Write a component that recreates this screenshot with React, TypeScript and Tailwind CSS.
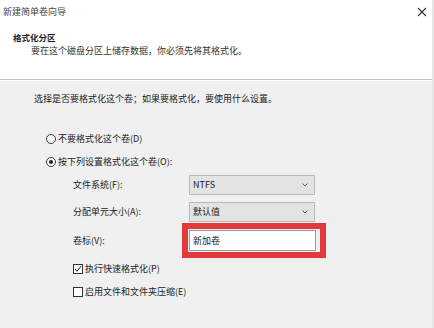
export default function App() {
  return (
    <div className="w-[434px] h-[328px] overflow-hidden bg-[#f0f0f0] border-r-2 border-[#e6e6e6] font-['Noto_Sans_CJK_SC',sans-serif] text-[9px] leading-[12px] text-[#222]">
      {/* 顶部白色标题区 */}
      <div className="bg-white h-[80px] border-b border-[#c2c2c2]">
        <div className="flex items-center justify-between h-[24px] pl-[3px] pr-[5px] text-[#444]">
          <span>新建简单卷向导</span>
          <svg width="10" height="10" viewBox="0 0 10 10" className="shrink-0 block">
            <path d="M1 1 L9 9 M9 1 L1 9" stroke="#333" strokeWidth="1.1" fill="none" />
          </svg>
        </div>
        <div className="pl-[13px] mt-[7px] font-bold text-[8.5px] h-[12px]">格式化分区</div>
        <div className="pl-[31px] mt-[2px] h-[12px] text-[#333]">要在这个磁盘分区上储存数据，你必须先将其格式化。</div>
      </div>
      <div className="h-px bg-white" />

      {/* 主体 */}
      <div className="flex flex-col pl-[34px] pt-[12px]">
        <div className="h-[12px]">选择是否要格式化这个卷；如果要格式化，要使用什么设置。</div>

        <div className="flex items-center h-[12px] mt-[28px] ml-[12px] gap-[2px]">
          <span className="w-[10px] h-[10px] rounded-full border border-[#333] bg-white" />
          <span>不要格式化这个卷(D)</span>
        </div>
        <div className="flex items-center h-[12px] mt-[11px] ml-[12px] gap-[2px]">
          <span className="w-[10px] h-[10px] rounded-full border border-[#333] bg-white flex items-center justify-center">
            <span className="w-[4px] h-[4px] rounded-full bg-[#222]" />
          </span>
          <span>按下列设置格式化这个卷(O):</span>
        </div>

        <div className="flex items-center h-[20px] mt-[7px] ml-[39px]">
          <span className="w-[116px]">文件系统(F):</span>
          <Combo value="NTFS" />
        </div>
        <div className="flex items-center h-[20px] mt-[7px] ml-[39px]">
          <span className="w-[116px]">分配单元大小(A):</span>
          <Combo value="默认值" />
        </div>
        <div className="flex items-center h-[35px] mt-[1px] ml-[39px]">
          <span className="w-[109px]">卷标(V):</span>
          <div className="border-[6px] border-[#e23a3c] pt-[1px] pb-[1px] pl-[1px] pr-[4px]">
            <div className="w-[127px] h-[21px] bg-white border border-[#9a9a9a] flex items-center pl-[3px]">新加卷</div>
          </div>
        </div>

        <div className="flex items-center h-[12px] mt-[5px] ml-[39px] gap-[2px]">
          <span className="w-[10px] h-[10px] border border-[#333] bg-white flex items-center justify-center">
            <svg width="8" height="8" viewBox="0 0 8 8">
              <path d="M1 4 L3 6.3 L7 1.2" stroke="#222" strokeWidth="1" fill="none" />
            </svg>
          </span>
          <span>执行快速格式化(P)</span>
        </div>
        <div className="flex items-center h-[12px] mt-[11px] ml-[39px] gap-[2px]">
          <span className="w-[10px] h-[10px] border border-[#333] bg-white" />
          <span>启用文件和文件夹压缩(E)</span>
        </div>
      </div>
    </div>
  );
}

function Combo({ value }: { value: string }) {
  return (
    <div className="w-[126px] h-[20px] bg-[#e3e3e3] border border-[#b9b9b9] flex items-center justify-between pl-[3px] pr-[6px]">
      <span>{value}</span>
      <svg width="6" height="4" viewBox="0 0 6 4">
        <path d="M0.5 0.5 L3 3 L5.5 0.5" stroke="#555" strokeWidth="1" fill="none" />
      </svg>
    </div>
  );
}
